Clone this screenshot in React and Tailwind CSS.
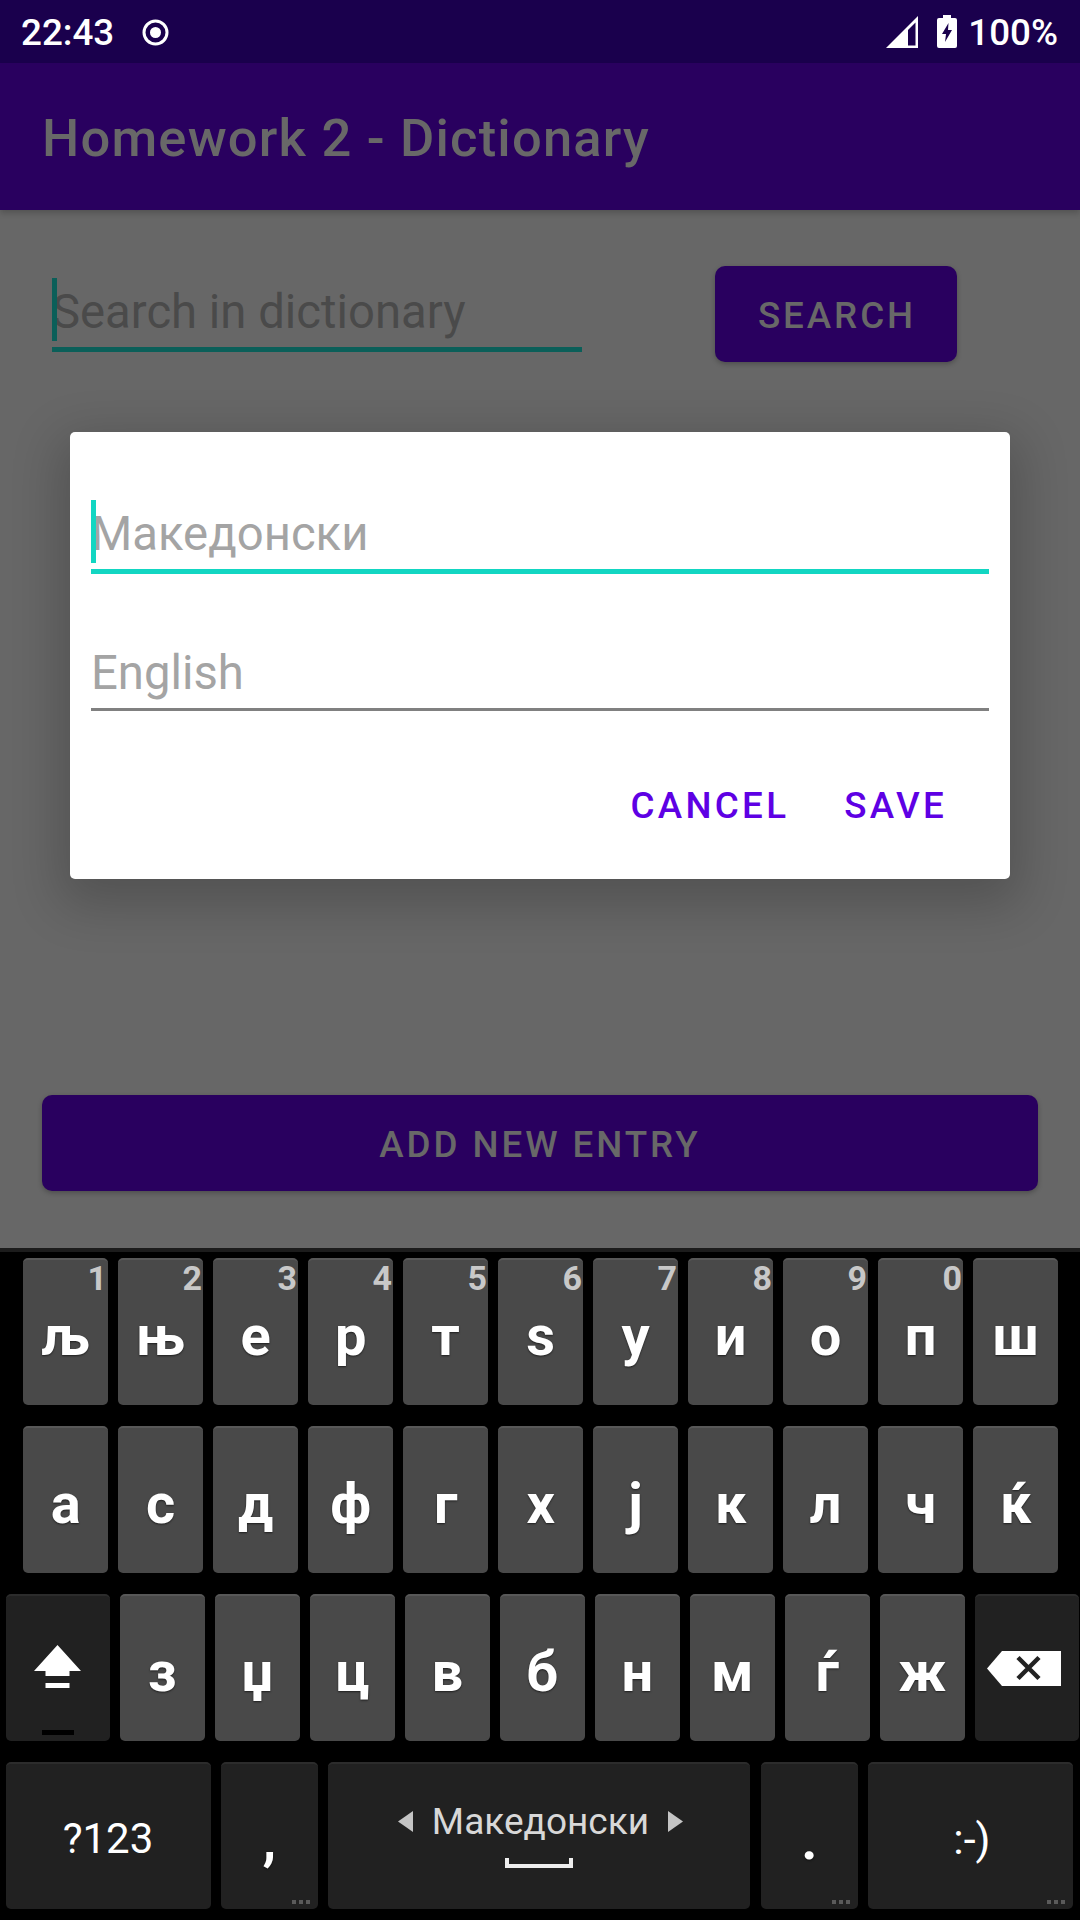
const rowOne = [
  ["љ", "1"], ["њ", "2"], ["е", "3"], ["р", "4"], ["т", "5"], ["ѕ", "6"],
  ["у", "7"], ["и", "8"], ["о", "9"], ["п", "0"], ["ш", ""],
];
const rowTwo = ["а", "с", "д", "ф", "г", "х", "ј", "к", "л", "ч", "ќ"];
const rowThree = ["з", "џ", "ц", "в", "б", "н", "м", "ѓ", "ж"];

const letterClass =
  "text-[56px] font-bold leading-none text-white [text-shadow:0_1px_2px_rgba(0,0,0,0.6)]";

const Key = ({ className = "", children }) => (
  <div
    className={`relative flex h-[147px] shrink-0 items-center justify-center rounded-[5px] border-t-2 ${className}`}
  >
    {children}
  </div>
);

const LetterKey = ({ label, hint }) => (
  <Key className="w-[84.5px] border-[#585858] bg-[#494949]">
    {hint && (
      <span className="absolute right-[1px] top-[-2px] text-[34px] font-bold leading-[40px] text-[#c8c8c8]">
        {hint}
      </span>
    )}
    <span className={`${letterClass} pt-[6px]`}>{label}</span>
  </Key>
);

const MoreDots = () => (
  <div className="absolute bottom-[5px] right-[8px] flex gap-[3px]">
    <span className="h-[4px] w-[4px] bg-[#5a5a5a]" />
    <span className="h-[4px] w-[4px] bg-[#5a5a5a]" />
    <span className="h-[4px] w-[4px] bg-[#5a5a5a]" />
  </div>
);

const Field = ({ hint, focused }) => (
  <div
    className={`relative h-[74px] w-full ${
      focused ? "border-b-[5px] border-[#12d6c2]" : "mt-[63px] border-b-[3px] border-[#808080]"
    }`}
  >
    {focused && <span className="absolute left-0 top-0 h-[63px] w-[5px] bg-[#12d6c2]" />}
    <div
      className={`text-[47.25px] text-[#a4a4a4] ${
        focused ? "leading-[69px]" : "leading-[73px]"
      }`}
    >
      {hint}
    </div>
  </div>
);

const Dialog = () => (
  <div className="absolute left-[70px] top-[432px] w-[940px] rounded-[5px] bg-white px-[21px] pt-[68px] pb-[25px] shadow-[0_16px_50px_10px_rgba(0,0,0,0.2)]">
    <Field hint="Македонски" focused />
    <Field hint="English" />
    <div className="mt-[47px] flex h-[96px] items-center justify-end gap-[55px] pr-[42px] text-[36.75px] font-medium tracking-[0.0892em] text-[#5e00e4]">
      <span>CANCEL</span>
      <span>SAVE</span>
    </div>
  </div>
);

export default function App() {
  return (
    <div className="relative flex h-[1920px] w-[1080px] flex-col overflow-hidden bg-[#676767] font-['Roboto',sans-serif]">
      {/* STATUS BAR */}
      <div className="flex h-[63px] shrink-0 items-center justify-between bg-[#1a004d] pl-[21px] pr-[22px] pt-[2px] text-[36.75px] font-medium text-white">
        <div className="flex items-center">
          <span>22:43</span>
          <svg width="27" height="27" viewBox="0 0 27 27" className="ml-[28px]">
            <circle cx="13.5" cy="13.5" r="11.5" fill="none" stroke="#fff" strokeWidth="3" />
            <circle cx="13.5" cy="13.5" r="5.5" fill="#fff" />
          </svg>
        </div>
        <div className="flex items-center">
          <svg width="32" height="32" viewBox="0 0 32 32" className="mb-[2px]">
            <path d="M0 32 L32 0 V32 Z" fill="#fff" />
            <path d="M22 14 L29.5 6.5 V29.5 H22 Z" fill="#1a004d" />
          </svg>
          <svg width="20" height="33" viewBox="0 0 20 33" className="ml-[19px] mb-[2px]">
            <path d="M6 0 H14 V3 H18 Q20 3 20 5 V31 Q20 33 18 33 H2 Q0 33 0 31 V5 Q0 3 2 3 H6 Z" fill="#fff" />
            <path d="M11.5 8 L5 19 H9 L8 27 L15 15 H11 Z" fill="#1a004d" />
          </svg>
          <span className="ml-[11px]">100%</span>
        </div>
      </div>

      {/* APP BAR */}
      <div className="flex h-[147px] shrink-0 items-center bg-[#29005f] pl-[42px] pt-[3px] text-[52.5px] font-medium tracking-[1.2px] text-[#686868] shadow-[0_3px_6px_rgba(0,0,0,0.2)]">
        Homework 2 - Dictionary
      </div>

      {/* MAIN */}
      <div className="pl-[52px] pt-[56px]">
        <div className="flex items-start gap-[133px]">
          <div className="relative mt-[12px] h-[74px] w-[530px] border-b-[5px] border-[#0b5f59]">
            <span className="absolute left-0 top-0 h-[63px] w-[5px] bg-[#0b5f59]" />
            <div className="text-[47.25px] leading-[69px] text-[#4a4a4a]">Search in dictionary</div>
          </div>
          <div className="flex h-[96px] w-[242px] items-center justify-center rounded-[10px] bg-[#29005f] pl-[2px] pt-[4px] text-[36.75px] font-medium tracking-[0.08em] text-[#686868] shadow-[0_2px_5px_rgba(0,0,0,0.25)]">
            SEARCH
          </div>
        </div>
      </div>
      <div className="ml-[42px] mt-[733px] flex h-[96px] w-[996px] items-center justify-center rounded-[10px] bg-[#29005f] pt-[4px] text-[36.75px] font-medium tracking-[0.08em] text-[#686868] shadow-[0_2px_5px_rgba(0,0,0,0.25)]">
        ADD NEW ENTRY
      </div>

      {/* KEYBOARD */}
      <div className="mt-auto flex h-[672px] flex-col gap-[21px] border-t-4 border-[#1c1c1c] bg-black pt-[6px]">
        <div className="flex gap-[10.5px] pl-[23.4px]">
          {rowOne.map(([label, hint]) => (
            <LetterKey key={label} label={label} hint={hint} />
          ))}
        </div>
        <div className="flex gap-[10.5px] pl-[23.4px]">
          {rowTwo.map((label) => (
            <LetterKey key={label} label={label} />
          ))}
        </div>
        <div className="flex gap-[10.5px] pl-[5.5px]">
          <Key className="w-[104px] border-[#2c2c2c] bg-[#212121]">
            <svg width="47" height="43" viewBox="0 0 47 43" className="mb-[4px]">
              <path d="M23.5 0 L47 26 H35.5 V31 H11.5 V26 H0 Z" fill="#fff" />
              <rect x="11.5" y="38" width="24" height="5" fill="#fff" />
            </svg>
            <span className="absolute bottom-[6px] left-[36px] h-[5px] w-[32px] bg-black" />
          </Key>
          {rowThree.map((label) => (
            <LetterKey key={label} label={label} />
          ))}
          <Key className="w-[104px] border-[#2c2c2c] bg-[#212121]">
            <svg width="74" height="35" viewBox="0 0 74 35" className="mb-[1px] mr-[7px]">
              <path d="M0 17.5 L15 0 H74 V35 H15 Z" fill="#fff" />
              <path d="M31 6.5 L52 27.5 M52 6.5 L31 27.5" stroke="#222" strokeWidth="4.5" />
            </svg>
          </Key>
        </div>
        <div className="flex gap-[10.7px] pl-[5.5px]">
          <Key className="w-[205px] border-[#2c2c2c] bg-[#212121] pt-[5px] text-[42px] leading-none text-white">
            ?123
          </Key>
          <Key className="w-[96.6px] border-[#2c2c2c] bg-[#212121]">
            <span className={`${letterClass} pt-[6px]`}>,</span>
            <MoreDots />
          </Key>
          <Key className="w-[422px] flex-col border-[#2c2c2c] bg-[#212121] pb-[6px]">
            <div className="flex items-center gap-[19px] pl-[2px] text-[37px] leading-[44px] text-[#d8d8d8]">
              <svg width="15" height="21" viewBox="0 0 15 21"><path d="M15 0 V21 L0 10.5 Z" fill="#c4c4c4" /></svg>
              <span>Македонски</span>
              <svg width="15" height="21" viewBox="0 0 15 21"><path d="M0 0 V21 L15 10.5 Z" fill="#c4c4c4" /></svg>
            </div>
            <svg width="68" height="10" viewBox="0 0 68 10" className="mt-[14px]">
              <path d="M0 0 H4 V6 H64 V0 H68 V10 H0 Z" fill="#eee" />
            </svg>
          </Key>
          <Key className="w-[96.6px] border-[#2c2c2c] bg-[#212121]">
            <span className={`${letterClass} pt-[6px]`}>.</span>
            <MoreDots />
          </Key>
          <Key className="w-[205px] border-[#2c2c2c] bg-[#212121] pt-[6px] pl-[2px] text-[43px] leading-none text-white">
            :-)
            <MoreDots />
          </Key>
        </div>
      </div>

      <Dialog />
    </div>
  );
}
